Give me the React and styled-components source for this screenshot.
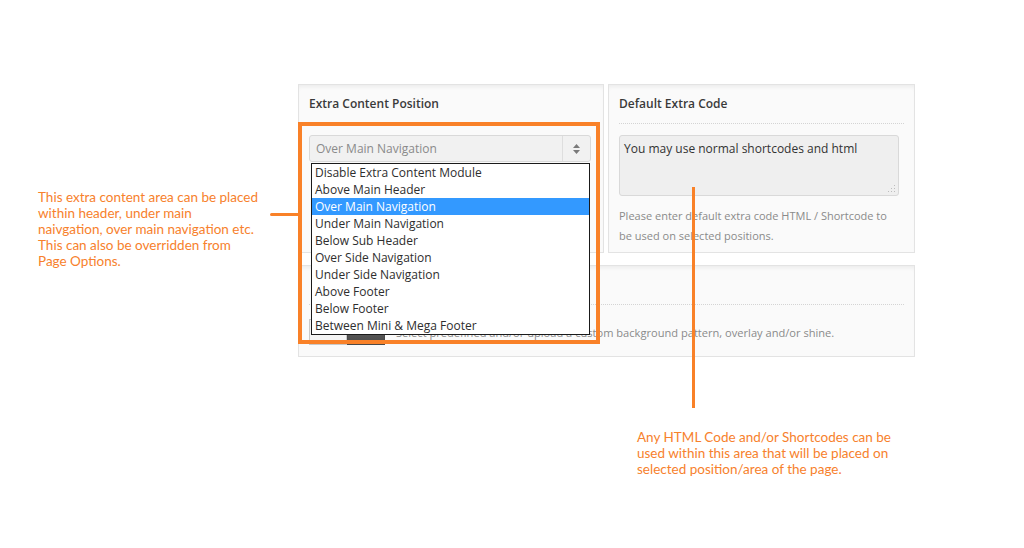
import React from "react";
import styled, { createGlobalStyle } from "styled-components";

const ORANGE = "#f98128";

const GlobalStyle = createGlobalStyle`
  html, body { margin: 0; padding: 0; background: #ffffff; }
  body { font-family: "Open Sans", "DejaVu Sans", sans-serif; }
  * { box-sizing: border-box; }
`;

const Page = styled.div`
  position: relative;
  width: 1024px;
  height: 548px;
  padding: 84px 0 0 298px;
  overflow: hidden;
`;

const TopRow = styled.div`
  display: grid;
  grid-template-columns: 306px 307px;
  column-gap: 4px;
`;

const Panel = styled.section`
  background: #fafafa;
  border: 1px solid #e3e3e3;
  box-shadow: inset 0 4px 4px -2px rgba(0, 0, 0, 0.06);
  padding: 11px 10px 10px;
  height: ${(p) => p.$h}px;
  width: ${(p) => (p.$w ? `${p.$w}px` : "auto")};
  margin-top: ${(p) => p.$mt || 0}px;
`;

const Title = styled.h3`
  margin: 0;
  min-height: 16px;
  font-size: 12px;
  line-height: 16px;
  font-weight: 600;
  color: #3a3a3a;
`;

const Divider = styled.div`
  border-top: 1px dotted #d4d4d4;
  margin: 11px 0 11px;
`;

const SelectBox = styled.div`
  display: flex;
  width: 282px;
  height: 27px;
  background: #f1f1f1;
  border: 1px solid #d9d9d9;
  border-radius: 3px;
`;

const SelectValue = styled.div`
  flex: 1;
  padding-left: 6px;
  font-size: 12px;
  line-height: 25px;
  color: #8a8a8a;
`;

const SelectArrow = styled.div`
  width: 28px;
  border-left: 1px solid #dedede;
  display: flex;
  align-items: center;
  justify-content: center;
`;

const CodeArea = styled.div`
  position: relative;
  width: 280px;
  height: 61px;
  background: #efefef;
  border: 1px solid #d9d9d9;
  border-radius: 3px;
  padding: 5px 4px;
  font-size: 12px;
  line-height: 16px;
  color: #333;
`;

const Grip = styled.svg`
  position: absolute;
  right: 2px;
  bottom: 2px;
`;

const Help = styled.p`
  margin: 10px 0 0;
  font-size: 11px;
  line-height: 20px;
  color: #8a8a8a;
`;

const SwatchRow = styled.div`
  display: flex;
  align-items: center;
  margin-top: 14px;
`;

const Swatch = styled.div`
  width: 38px;
  height: 26px;
  background: ${(p) => (p.$dark ? "linear-gradient(#666, #4a4a4a)" : "#f4f4f4")};
  border: 1px solid ${(p) => (p.$dark ? "#4a4a4a" : "#c9c9c9")};
`;

const SwatchText = styled.span`
  margin-left: 11px;
  font-size: 11.1px;
  color: #8a8a8a;
`;

const DropList = styled.ul`
  position: absolute;
  left: 311px;
  top: 163px;
  width: 279px;
  margin: 0;
  padding: 0;
  list-style: none;
  background: #fff;
  border: 1px solid #1a1a1a;
`;

const DropItem = styled.li`
  height: 17px;
  line-height: 17px;
  padding-left: 3px;
  font-size: 12px;
  color: ${(p) => (p.$active ? "#fff" : "#2e2e2e")};
  background: ${(p) => (p.$active ? "#3399ff" : "transparent")};
  white-space: nowrap;
`;

const Highlight = styled.div`
  position: absolute;
  left: 298px;
  top: 122px;
  width: 302px;
  height: 222px;
  border: 4px solid ${ORANGE};
  pointer-events: none;
`;

const HLine = styled.div`
  position: absolute;
  left: 270px;
  top: 213px;
  width: 30px;
  height: 3px;
  border-radius: 2px 0 0 2px;
  background: ${ORANGE};
`;

const VLine = styled.div`
  position: absolute;
  left: 692px;
  top: 187px;
  width: 3px;
  height: 221px;
  background: ${ORANGE};
`;

const Note = styled.p`
  position: absolute;
  left: ${(p) => p.$x}px;
  top: ${(p) => p.$y}px;
  width: ${(p) => p.$w}px;
  margin: 0;
  font-family: "Lato", "Open Sans", sans-serif;
  font-size: 13.5px;
  line-height: 16px;
  color: #f7812c;
`;

const options = [
  "Disable Extra Content Module",
  "Above Main Header",
  "Over Main Navigation",
  "Under Main Navigation",
  "Below Sub Header",
  "Over Side Navigation",
  "Under Side Navigation",
  "Above Footer",
  "Below Footer",
  "Between Mini & Mega Footer",
];

export default function App() {
  return (
    <>
      <GlobalStyle />
      <Page>
        <TopRow>
          <Panel $h={169}>
            <Title>Extra Content Position</Title>
            <Divider />
            <SelectBox>
              <SelectValue>Over Main Navigation</SelectValue>
              <SelectArrow>
                <svg width="9" height="12" viewBox="0 0 9 12">
                  <path d="M4.5 1 L8 5 L1 5 Z" fill="#7a7a7a" />
                  <path d="M1 7 L8 7 L4.5 11 Z" fill="#7a7a7a" />
                </svg>
              </SelectArrow>
            </SelectBox>
          </Panel>
          <Panel $h={169}>
            <Title>Default Extra Code</Title>
            <Divider />
            <CodeArea>
              You may use normal shortcodes and html
              <Grip width="8" height="8" viewBox="0 0 8 8">
                <g fill="#bdbdbd">
                  <rect x="6" y="0" width="1" height="1" />
                  <rect x="3" y="3" width="1" height="1" />
                  <rect x="6" y="3" width="1" height="1" />
                  <rect x="0" y="6" width="1" height="1" />
                  <rect x="3" y="6" width="1" height="1" />
                  <rect x="6" y="6" width="1" height="1" />
                </g>
              </Grip>
            </CodeArea>
            <Help>
              Please enter default extra code HTML / Shortcode to
              <br />
              be used on selected positions.
            </Help>
          </Panel>
        </TopRow>
        <Panel $h={92} $w={617} $mt={12}>
          <Title />
          <Divider />
          <SwatchRow>
            <Swatch />
            <Swatch $dark />
            <SwatchText>
              Select predefined and/or upload a custom background pattern, overlay and/or shine.
            </SwatchText>
          </SwatchRow>
        </Panel>

        <DropList>
          {options.map((o) => (
            <DropItem key={o} $active={o === "Over Main Navigation"}>
              {o}
            </DropItem>
          ))}
        </DropList>
        <Highlight />
        <HLine />
        <VLine />
        <Note $x={38} $y={189} $w={250}>
          This extra content area can be placed
          <br />
          within header, under main
          <br />
          naivgation, over main navigation etc.
          <br />
          This can also be overridden from
          <br />
          Page Options.
        </Note>
        <Note $x={637} $y={429} $w={290}>
          Any HTML Code and/or Shortcodes can be
          <br />
          used within this area that will be placed on
          <br />
          selected position/area of the page.
        </Note>
      </Page>
    </>
  );
}
